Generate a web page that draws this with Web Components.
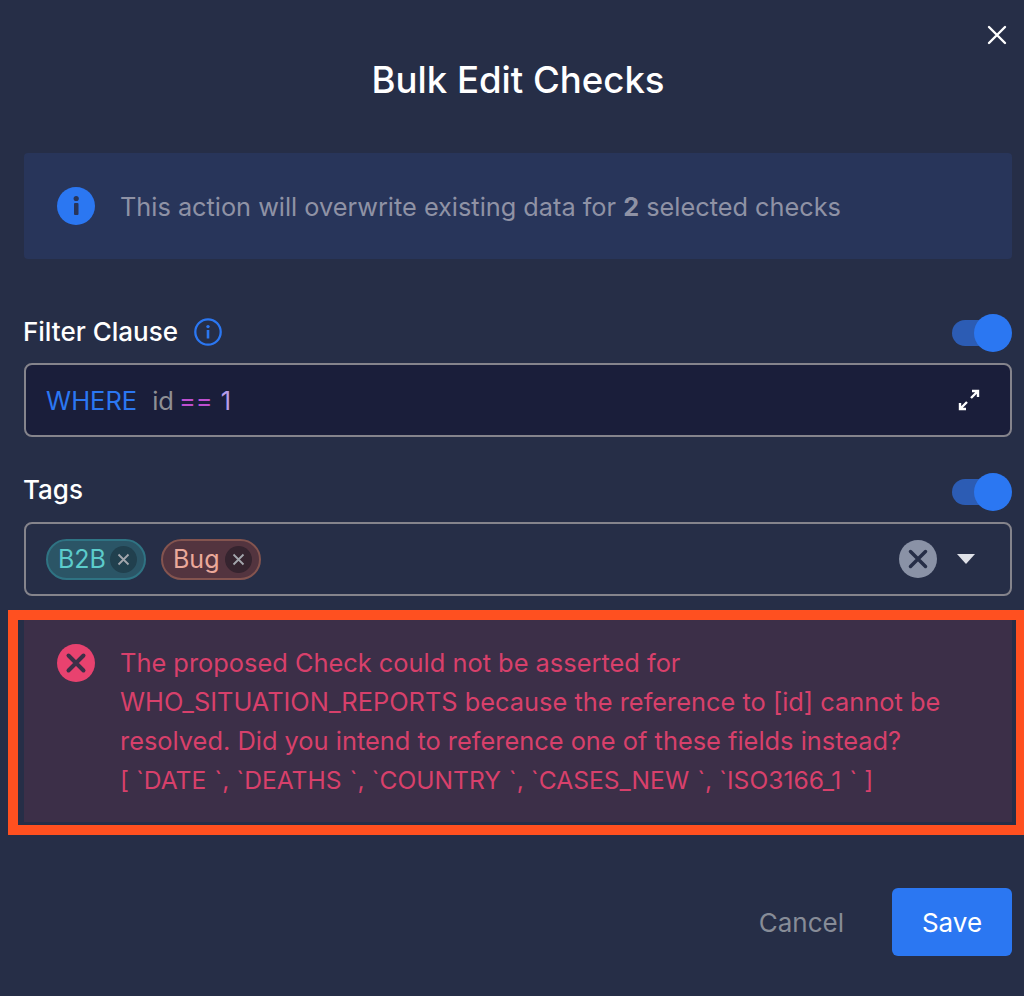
<!DOCTYPE html>
<html lang="en">
<head>
<meta charset="utf-8">
<title>Bulk Edit Checks</title>
<style>
    html, body { margin: 0; background: #262e47; }
    body { font-family: Inter, "Liberation Sans", sans-serif; }
    .fields { font-size: 24.6px; }
    .fields i { font-style: normal; margin-left: 8px; }
</style>
</head>
<body>

<bulk-dialog heading="Bulk Edit Checks">
    <alert-box>
        <span>This action will overwrite existing data for <b>2</b> selected checks</span>
    </alert-box>

    <form-field label="Filter Clause" hint>
        <code-input></code-input>
    </form-field>

    <form-field label="Tags">
        <tag-select>
            <tag-chip kind="teal">B2B</tag-chip>
            <tag-chip kind="red">Bug</tag-chip>
        </tag-select>
    </form-field>

    <error-frame>
        <alert-box kind="error">
            <span>The proposed Check could not be asserted for<br>WHO_SITUATION_REPORTS because the reference to [id] cannot be<br>resolved. Did you intend to reference one of these fields instead?<br><span class="fields">[ `DATE<i>`</i>, `DEATHS<i>`</i>, `COUNTRY<i>`</i>, `CASES_NEW<i>`</i>, `ISO3166_1<i>`</i> ]</span></span>
        </alert-box>
    </error-frame>

    <dialog-actions></dialog-actions>
</bulk-dialog>

<script>
const dialogTemplate = document.createElement('template');
dialogTemplate.innerHTML = `
    <style>
        :host {
            display: block;
            box-sizing: border-box;
            width: 1024px;
            height: 996px;
            padding: 0 12px 0 24px;
            background: #262e47;
            color: #fff;
        }
        .close-row {
            display: flex;
            justify-content: flex-end;
            align-items: center;
            height: 60px;
            padding: 10px 5px 0 0;
            box-sizing: border-box;
        }
        .close-row svg { display: block; }
        h1 {
            margin: 0 0 53px;
            font-size: 36.6px;
            line-height: 40px;
            font-weight: 500;
            text-align: center;
        }
    </style>
    <div class="close-row">
        <svg width="20" height="20" viewBox="0 0 20 20" fill="none" stroke="#fff" stroke-width="2.4" stroke-linecap="round">
            <path d="M2 2 18 18M18 2 2 18"/>
        </svg>
    </div>
    <h1></h1>
    <slot></slot>
`;

class BulkDialog extends HTMLElement {
    connectedCallback() {
        const shadowRoot = this.attachShadow({ mode: 'open' });
        shadowRoot.appendChild(dialogTemplate.content.cloneNode(true));
        shadowRoot.querySelector('h1').textContent = this.getAttribute('heading');
    }
}

const alertTemplate = document.createElement('template');
alertTemplate.innerHTML = `
    <style>
        :host {
            display: flex;
            align-items: center;
            gap: 25px;
            box-sizing: border-box;
            height: 106px;
            padding: 0 33px;
            background: #28355a;
            border-radius: 4px;
            color: #8f92a5;
            font-size: 25.3px;
            line-height: 39px;
        }
        :host([kind="error"]) {
            align-items: flex-start;
            height: 202px;
            padding: 23px 33px 0;
            background: #3c2f48;
            color: #d8406b;
            font-size: 25.4px;
            border-radius: 0;
        }
        :host([kind="error"]) .icon { margin-top: 1px; }
        .icon { display: block; flex: none; }
        ::slotted(*) { display: block; }
    </style>
    <svg class="icon" width="38" height="38" viewBox="0 0 38 38"></svg>
    <slot></slot>
`;

class AlertBox extends HTMLElement {
    connectedCallback() {
        const shadowRoot = this.attachShadow({ mode: 'open' });
        shadowRoot.appendChild(alertTemplate.content.cloneNode(true));
        const icon = shadowRoot.querySelector('.icon');
        if (this.getAttribute('kind') === 'error') {
            icon.innerHTML = '<circle cx="19" cy="19" r="19" fill="#e8426f"/><path d="M11.5 11.5 26.500 26.500M26.500 11.500 11.500 26.500" stroke="#3c2f48" stroke-width="4" stroke-linecap="round"/>';
        } else {
            icon.innerHTML = '<circle cx="19" cy="19" r="19" fill="#2b77f2"/><rect x="17" y="16" width="4.500" height="12" rx="1" fill="#28355a"/><circle cx="19.200" cy="11.500" r="2.600" fill="#28355a"/>';
        }
    }
}

const fieldTemplate = document.createElement('template');
fieldTemplate.innerHTML = `
    <style>
        :host {
            display: block;
            margin-top: 36px;
        }
        :host([hint]) { margin-top: 55px; }
        .head {
            display: flex;
            align-items: center;
            height: 38px;
            margin-bottom: 11px;
            font-size: 26px;
            font-weight: 500;
            color: #fff;
        }
        .label { margin: 0 0 5px -1px; }
        :host([hint]) .label { margin-bottom: 3px; }
        .hint { display: none; margin: 0 0 2px 15px; }
        :host([hint]) .hint { display: block; }
        .toggle {
            position: relative;
            margin-left: auto;
            width: 60px;
            height: 38px;
        }
        .toggle i {
            display: block;
            position: absolute;
            left: 0;
            top: 6px;
            width: 52px;
            height: 26px;
            border-radius: 13px;
            background: #2c5cb4;
        }
        .toggle b {
            display: block;
            position: absolute;
            right: 0;
            top: 0;
            width: 38px;
            height: 38px;
            border-radius: 50%;
            background: #2b77f2;
        }
    </style>
    <div class="head">
        <span class="label"></span>
        <svg class="hint" width="30" height="30" viewBox="0 0 30 30" fill="none">
            <circle cx="15" cy="15" r="12.700" stroke="#2b77f2" stroke-width="2.300"/>
            <rect x="13.700" y="13" width="2.600" height="8.500" fill="#2b77f2"/>
            <circle cx="15" cy="9.600" r="1.700" fill="#2b77f2"/>
        </svg>
        <div class="toggle"><i></i><b></b></div>
    </div>
    <slot></slot>
`;

class FormField extends HTMLElement {
    connectedCallback() {
        const shadowRoot = this.attachShadow({ mode: 'open' });
        shadowRoot.appendChild(fieldTemplate.content.cloneNode(true));
        shadowRoot.querySelector('.label').textContent = this.getAttribute('label');
    }
}

const codeTemplate = document.createElement('template');
codeTemplate.innerHTML = `
    <style>
        :host {
            display: flex;
            align-items: center;
            box-sizing: border-box;
            height: 74px;
            padding: 0 30px 0 20px;
            background: #1a1e3a;
            border: 2px solid #85848c;
            border-radius: 8px;
            font-size: 25.5px;
        }
        .kw { color: #2b77f2; margin-right: 15px; }
        .id { color: #8e8f94; margin-right: 5px; }
        .op { color: #bf4fd0; margin-right: 8px; }
        .num { color: #b79ce8; }
        svg { margin-left: auto; display: block; }
    </style>
    <span class="kw">WHERE</span><span class="id">id</span><span class="op">==</span><span class="num">1</span>
    <svg width="22" height="22" viewBox="0 0 22 22" fill="none" stroke="#fff" stroke-width="2.400">
        <path d="M13 9 20 2M14 2H20V8"/>
        <path d="M9 13 2 20M8 20H2V14"/>
    </svg>
`;

class CodeInput extends HTMLElement {
    connectedCallback() {
        this.attachShadow({ mode: 'open' }).appendChild(codeTemplate.content.cloneNode(true));
    }
}

const selectTemplate = document.createElement('template');
selectTemplate.innerHTML = `
    <style>
        :host {
            display: flex;
            align-items: center;
            gap: 15px;
            box-sizing: border-box;
            height: 74px;
            padding: 0 35px 0 20px;
            border: 2px solid #85848c;
            border-radius: 8px;
        }
        .clear { margin-left: auto; display: block; }
        .arrow {
            width: 0;
            height: 0;
            margin-left: 5px;
            border-left: 9.500px solid transparent;
            border-right: 9.500px solid transparent;
            border-top: 10px solid #dfe1e8;
        }
    </style>
    <slot></slot>
    <svg class="clear" width="38" height="38" viewBox="0 0 38 38">
        <circle cx="19" cy="19" r="19" fill="#8a92a6"/>
        <path d="M11.500 11.500 26.500 26.500M26.500 11.500 11.500 26.500" stroke="#262e47" stroke-width="3.500" stroke-linecap="round"/>
    </svg>
    <div class="arrow"></div>
`;

class TagSelect extends HTMLElement {
    connectedCallback() {
        this.attachShadow({ mode: 'open' }).appendChild(selectTemplate.content.cloneNode(true));
    }
}

const chipTemplate = document.createElement('template');
chipTemplate.innerHTML = `
    <style>
        :host {
            display: flex;
            align-items: center;
            box-sizing: border-box;
            width: 100px;
            height: 41px;
            padding: 0 7px 0 10px;
            border-radius: 21px;
            font-size: 25px;
        }
        :host([kind="teal"]) {
            background: #2b5566;
            border: 2px solid #2f7383;
            color: #5ccccb;
            --x-bg: #21404e;
        }
        :host([kind="red"]) {
            background: #53343f;
            border: 2px solid #84544f;
            color: #eba99a;
            --x-bg: #35242f;
        }
        svg { margin-left: auto; display: block; flex: none; }
        circle { fill: var(--x-bg); }
    </style>
    <slot></slot>
    <svg width="27" height="27" viewBox="0 0 27 27">
        <circle cx="13.500" cy="13.500" r="13.500"/>
        <path d="M8.500 8.500 18.500 18.500M18.500 8.500 8.500 18.500" stroke="#a3a6ad" stroke-width="1.800"/>
    </svg>
`;

class TagChip extends HTMLElement {
    connectedCallback() {
        this.attachShadow({ mode: 'open' }).appendChild(chipTemplate.content.cloneNode(true));
    }
}

const frameTemplate = document.createElement('template');
frameTemplate.innerHTML = `
    <style>
        :host {
            display: block;
            box-sizing: border-box;
            width: 1016px;
            height: 225px;
            margin: 14px 0 0 -16px;
            padding: 0 4px 3px 6px;
            border: 10px solid #ff5020;
            border-right-width: 8px;
        }
    </style>
    <slot></slot>
`;

class ErrorFrame extends HTMLElement {
    connectedCallback() {
        this.attachShadow({ mode: 'open' }).appendChild(frameTemplate.content.cloneNode(true));
    }
}

const actionsTemplate = document.createElement('template');
actionsTemplate.innerHTML = `
    <style>
        :host {
            display: flex;
            justify-content: flex-end;
            align-items: center;
            gap: 48px;
            margin-top: 53px;
            font-size: 26px;
        }
        .cancel { color: #878c97; }
        .save {
            display: flex;
            align-items: center;
            justify-content: center;
            width: 120px;
            height: 68px;
            border-radius: 6px;
            background: #2b77f2;
            color: #fff;
        }
    </style>
    <span class="cancel">Cancel</span>
    <div class="save">Save</div>
`;

class DialogActions extends HTMLElement {
    connectedCallback() {
        this.attachShadow({ mode: 'open' }).appendChild(actionsTemplate.content.cloneNode(true));
    }
}

customElements.define('bulk-dialog', BulkDialog);
customElements.define('alert-box', AlertBox);
customElements.define('form-field', FormField);
customElements.define('code-input', CodeInput);
customElements.define('tag-select', TagSelect);
customElements.define('tag-chip', TagChip);
customElements.define('error-frame', ErrorFrame);
customElements.define('dialog-actions', DialogActions);
</script>
</body>
</html>
